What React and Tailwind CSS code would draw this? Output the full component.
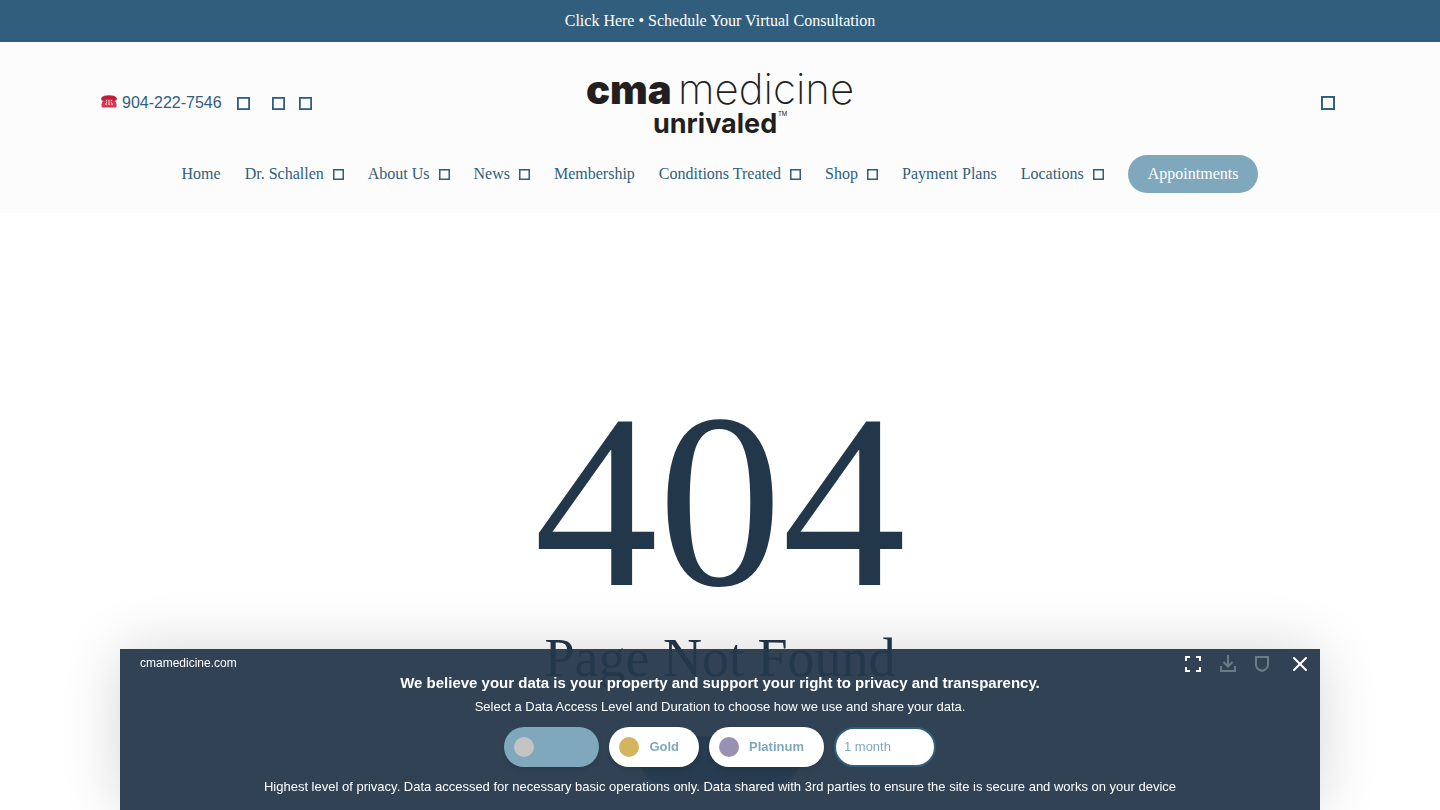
import { X } from 'lucide-react';

const navItems = [
  { label: 'Home' },
  { label: 'Dr. Schallen', menu: true },
  { label: 'About Us', menu: true },
  { label: 'News', menu: true },
  { label: 'Membership' },
  { label: 'Conditions Treated', menu: true },
  { label: 'Shop', menu: true },
  { label: 'Payment Plans' },
  { label: 'Locations', menu: true },
];

const levels = [
  { label: 'Silver', dot: 'bg-[#c4c4c4]', style: 'bg-[#7fa8bc] text-[#7fa8bc]', active: true },
  { label: 'Gold', dot: 'bg-[#d4b45f]', style: 'bg-white text-[#7fa8bc]' },
  { label: 'Platinum', dot: 'bg-[#9a90b3]', style: 'bg-white text-[#7fa8bc]' },
];

function Box({ size = 13 }) {
  return (
    <svg width={size} height={size} viewBox="0 0 13 13" fill="none" stroke="currentColor" strokeWidth="1.8" aria-hidden="true">
      <rect x="0.9" y="0.9" width="11.2" height="11.2" />
    </svg>
  );
}

function Phone() {
  return (
    <svg width="16" height="13" viewBox="0 0 16 13" className="mb-1" aria-hidden="true">
      <path d="M3 3h10l2.500 6v2.300A1.200 1.200 0 0 1 14.300 12.500H1.700A1.200 1.200 0 0 1 .5 11.300V9z" fill="#e0314f" />
      <path d="M.2 4.600V3C1.500 1 4.500 .3 8 .3s6.500.7 7.800 2.700v1.600c0 .6-.4.9-1 .9h-2.300c-.6 0-1-.4-1-1v-.6h-7v.6c0 .6-.4 1-1 1H1.200c-.6 0-1-.3-1-.9z" fill="#bb1f3a" />
      <path d="M5.500 5v1.200M10.500 5v1.200M8 5v4M5.800 7l-1 2.300M10.200 7l1 2.300M4 9.300h1.800M7 9.300h2M10.200 9.300H12" stroke="#fbdde2" strokeWidth=".9" />
    </svg>
  );
}

function Logo() {
  return (
    <a href="#" aria-label="cma medicine unrivaled">
      <svg width="270" height="80" viewBox="0 0 270 80" fill="#231f20" fontFamily="Inter, sans-serif">
        <text x="1" y="41" fontSize="40" fontWeight="900">cma</text>
        <text x="93" y="41" fontSize="42" fontWeight="200">medicine</text>
        <text x="68" y="70" fontSize="27" fontWeight="700">unrivaled</text>
        <text x="193" y="53" fontSize="6">TM</text>
      </svg>
    </a>
  );
}

function Header() {
  return (
    <header className="bg-[#fcfcfc] text-[#315e7d] pt-[21px] pb-5">
      <div className="grid grid-cols-[1fr_auto_1fr] items-center px-[101px]">
        <div className="flex items-center font-['Liberation_Sans',sans-serif]">
          <a href="#" className="flex items-center gap-[5px] mr-[15px]">
            <Phone />
            904-222-7546
          </a>
          <a href="#" aria-label="Facebook" className="mr-[22px]"><Box /></a>
          <a href="#" aria-label="Instagram" className="mr-[14px]"><Box /></a>
          <a href="#" aria-label="YouTube"><Box /></a>
        </div>
        <Logo />
        <button aria-label="Search" className="justify-self-end mr-1"><Box size={14} /></button>
      </div>
      <nav className="flex items-center justify-center gap-6 mt-3">
        {navItems.map(item => (
          <a key={item.label} href="#" className="flex items-center gap-[9px] whitespace-nowrap">
            {item.label}
            {item.menu && <Box size={11} />}
          </a>
        ))}
        <a href="#" className="rounded-full bg-[#7fa8bc] text-white px-5 py-[7px]">Appointments</a>
      </nav>
    </header>
  );
}

function PrivacyBanner() {
  return (
    <section aria-label="Privacy" className="fixed bottom-0 inset-x-[120px] bg-[#25384b]/95 text-white text-center font-['Liberation_Sans',sans-serif] shadow-[0_0_60px_rgba(0,0,0,0.16)] pb-[13px]">
      <div className="flex justify-between items-start h-6 pt-[3px] pl-5 pr-2">
        <span className="text-xs leading-[22px]">cmamedicine.com</span>
        <div className="flex items-center gap-[18px]">
          <button aria-label="Expand">
            <svg width="18" height="18" viewBox="0 0 18 18" fill="none" stroke="currentColor" strokeWidth="2">
              <path d="M2 6V2h4M12 2h4v4M16 12v4h-4M6 16H2v-4" />
            </svg>
          </button>
          <button aria-label="Download" className="text-[#6d7a87]">
            <svg width="16" height="18" viewBox="0 0 16 18" fill="none" stroke="currentColor" strokeWidth="2">
              <path d="M8 0v11M3.500 7L8 11.500 12.500 7M1 11v5h14v-5" />
            </svg>
          </button>
          <button aria-label="Privacy policy" className="text-[#6d7a87]">
            <svg width="16" height="18" viewBox="0 0 16 18" fill="none" stroke="currentColor" strokeWidth="2">
              <path d="M2 2h12v8c0 3-3 5-6 6-3-1-6-3-6-6z" />
            </svg>
          </button>
          <button aria-label="Close"><X size={24} /></button>
        </div>
      </div>
      <h2 className="text-[15px] leading-5 font-bold">We believe your data is your property and support your right to privacy and transparency.</h2>
      <p className="text-[13px] leading-5 mt-1">Select a Data Access Level and Duration to choose how we use and share your data.</p>
      <div className="flex justify-center items-center gap-[10px] mt-[10px] text-[13px]">
        {levels.map(l => (
          <button key={l.label} aria-pressed={!!l.active} className={`flex items-center gap-[10px] h-10 pl-[10px] pr-5 rounded-full font-bold shadow-md ${l.style}`}>
            <span className={`size-5 rounded-full ${l.dot}`} />
            {l.label}
          </button>
        ))}
        <select aria-label="Duration" className="appearance-none h-10 w-[102px] pl-2 rounded-full border-2 border-[#315e7d] bg-white text-[#7fa8bc]">
          <option>1 month</option>
        </select>
      </div>
      <p className="text-[13px] leading-5 mt-[10px]">Highest level of privacy. Data accessed for necessary basic operations only. Data shared with 3rd parties to ensure the site is secure and works on your device</p>
    </section>
  );
}

export default function App() {
  return (
    <div className="h-screen overflow-hidden bg-white font-['Liberation_Serif',serif] text-base">
      <a href="#" className="block bg-[#315e7d] text-white text-center py-[9px]">Click Here • Schedule Your Virtual Consultation</a>
      <Header />
      <main className="flex flex-col items-center pt-[165px] text-[#22374a]">
        <h1 className="text-[248px] leading-[248px]">404</h1>
        <h2 className="text-[54px] leading-[60px] mt-[2px]">Page Not Found</h2>
        <a href="#" aria-label="Back Home" className="rounded-full bg-[#5288ad] w-40 h-12 mt-12" />
      </main>
      <PrivacyBanner />
    </div>
  );
}
